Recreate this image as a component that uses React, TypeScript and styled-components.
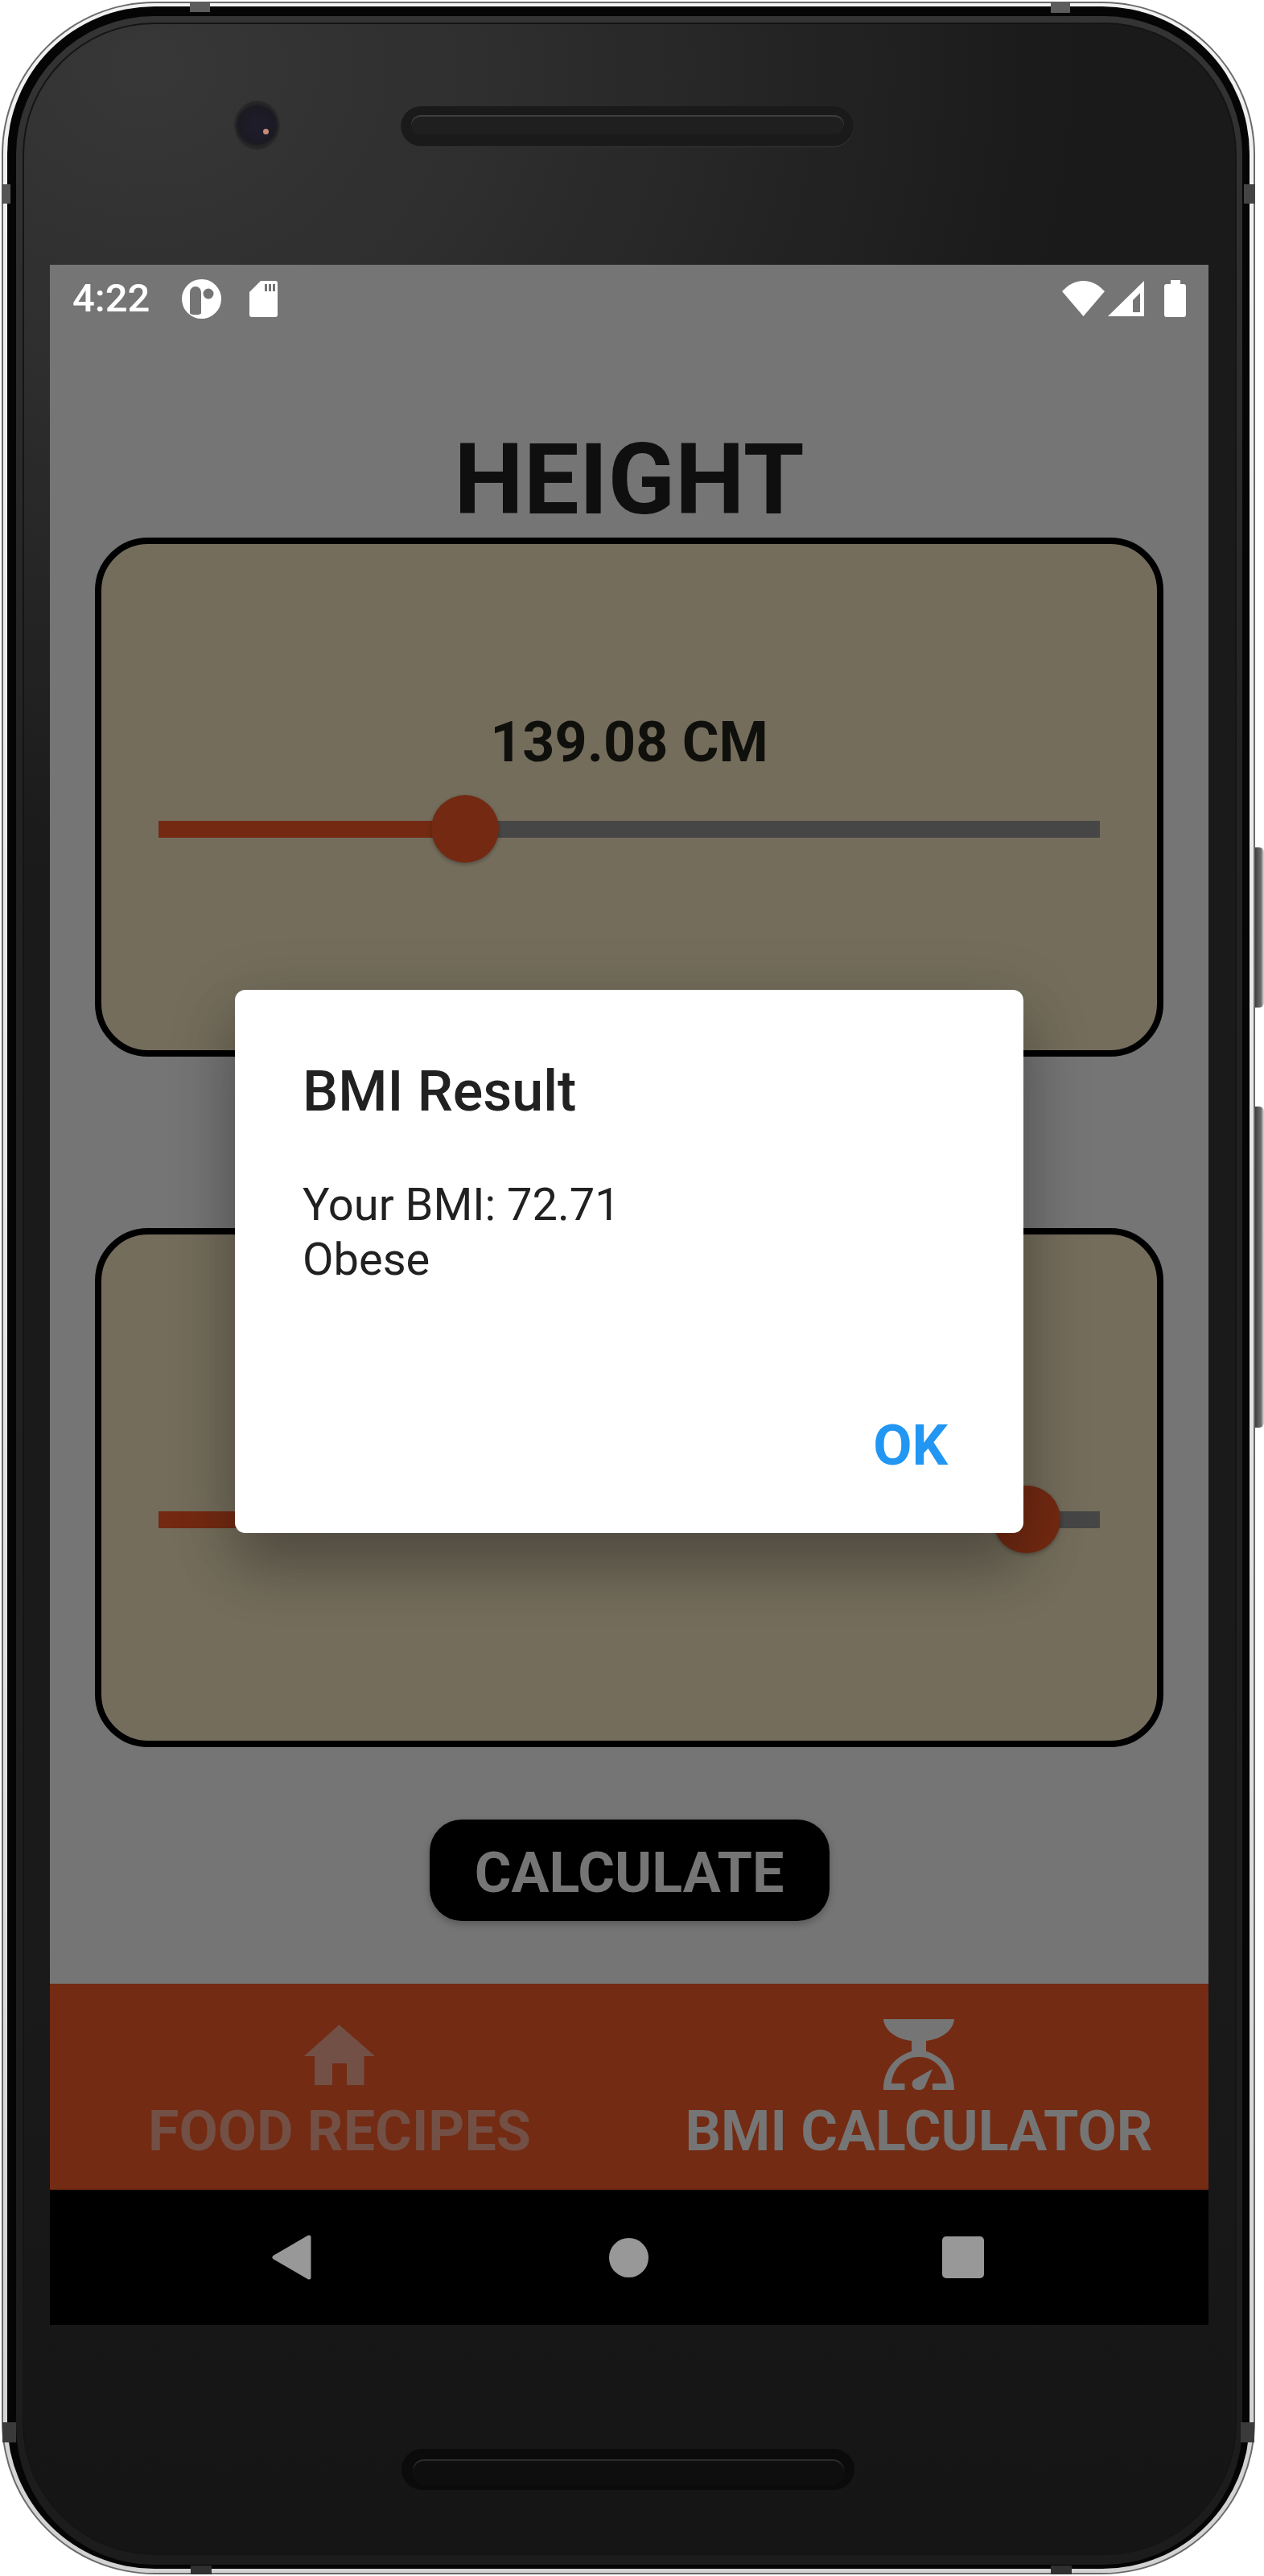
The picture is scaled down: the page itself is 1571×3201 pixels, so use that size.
import React from "react";
import styled, { createGlobalStyle } from "styled-components";

const Global = createGlobalStyle`
  * { box-sizing: border-box; }
  html, body { margin: 0; padding: 0; background: #fff; }
  body { font-family: Roboto, "Liberation Sans", sans-serif; }
`;

const Page = styled.div`
  position: relative;
  width: 1571px;
  height: 3201px;
  padding: 2px 0 0 2px;
  background: #fff;
  overflow: hidden;
`;

const SideButton = styled.div<{ $top: number; $height: number }>`
  position: absolute;
  left: 1558px;
  top: ${(p) => p.$top}px;
  width: 13px;
  height: ${(p) => p.$height}px;
  border-radius: 0 6px 6px 0;
  background: linear-gradient(90deg, #2e2e2e 0%, #5a5a5a 45%, #6a6a6a 70%, #dcdcdc 100%);
`;

const Shell = styled.div`
  position: relative;
  width: 1558px;
  height: 3197px;
  padding: 2px;
  border-radius: 190px;
  background: #6a6a6a;
`;

const Silver = styled.div`
  height: 100%;
  padding: 4px 5px 5px 5px;
  border-radius: 188px;
  background: linear-gradient(180deg, #f2f2f2 0%, #e6e6e6 50%, #d2d2d2 100%);
`;

const Gap = styled.div`
  height: 100%;
  padding: 12px 9px 5px 11px;
  border-radius: 183px;
  background: #050505;
`;

const Strip = styled.div`
  height: 100%;
  padding: 8px 7px 12px 8px;
  border-radius: 172px;
  background: linear-gradient(180deg, #343434 0%, #222 30%, #1c1c1c 100%);
`;

const Line = styled.div`
  height: 100%;
  padding: 2px;
  border-radius: 164px;
  background: #141414;
`;

const Bezel = styled.div`
  height: 100%;
  padding: 0 33px 0 32px;
  border-radius: 162px;
  background:
    radial-gradient(ellipse 1150px 1000px at 10% 4%, #373737 0%, #2e2e2e 38%, #1a1a1a 100%) no-repeat,
    linear-gradient(180deg, #1a1a1a 0%, #1a1a1a 75%, #151515 100%);
  background-size: 100% 1300px, 100% 100%;
`;

const Band = styled.div<{ $x: number; $y: number; $w: number; $h: number; $c: string }>`
  position: absolute;
  left: ${(p) => p.$x}px;
  top: ${(p) => p.$y}px;
  width: ${(p) => p.$w}px;
  height: ${(p) => p.$h}px;
  background: ${(p) => p.$c};
`;

const TopBezel = styled.div`
  height: 299px;
  padding: 96px 0 0 230px;
  display: flex;
  align-items: flex-start;
  gap: 151px;
`;

const Camera = styled.div`
  position: relative;
  width: 55px;
  height: 59px;
  border-radius: 50%;
  background: radial-gradient(circle at 50% 50%, #1f1d2b 0%, #1b1a23 58%, #262626 66%, #232323 100%);
  box-shadow: 0 0 0 1px #2c2c2c;
  &::after {
    content: "";
    position: absolute;
    left: 35px;
    top: 34px;
    width: 7px;
    height: 7px;
    border-radius: 50%;
    background: #c98a78;
  }
`;

const Speaker = styled.div<{ $bottom?: boolean }>`
  width: 563px;
  height: 51px;
  margin-top: ${(p) => (p.$bottom ? 0 : 6)}px;
  padding: ${(p) => (p.$bottom ? "13px 13px 6px 14px" : "11px 12px 16px 13px")};
  border-radius: 26px;
  background: ${(p) => (p.$bottom ? "#0b0b0b" : "#1a1a1a")};
  box-shadow: ${(p) => (p.$bottom ? "none" : "inset 0 -1px 1px #3c3c3c")};
`;

const SpeakerSlot = styled.div<{ $bottom?: boolean }>`
  height: 100%;
  border-radius: 14px;
  background: ${(p) => (p.$bottom ? "#0e0e0e" : "#1f1f1f")};
  box-shadow: inset 0 2px 1px ${(p) => (p.$bottom ? "#2e2e2e" : "#3f3f3f")};
`;

const BottomBezel = styled.div`
  height: 284px;
  padding: 154px 0 0 437px;
`;

const Screen = styled.div`
  position: relative;
  width: 1440px;
  height: 2560px;
  display: flex;
  flex-direction: column;
  background: #757575;
  overflow: hidden;
`;

const StatusBar = styled.div`
  flex: none;
  height: 84px;
  padding: 0 28px;
  display: flex;
  align-items: center;
  justify-content: space-between;
`;

const StatusGroup = styled.div<{ $gap: number }>`
  display: flex;
  align-items: center;
  gap: ${(p) => p.$gap}px;
`;

const Time = styled.span`
  font-size: 49px;
  line-height: 58px;
  font-weight: 500;
  color: #fff;
  margin-right: 5px;
`;

const BatterySlot = styled.div`
  display: flex;
  margin-left: 21px;
`;

const Content = styled.main`
  flex: 1;
  padding: 111px 56px 0;
  display: flex;
  flex-direction: column;
  align-items: center;
`;

const Heading = styled.h1`
  margin: 0;
  font-size: 122.5px;
  line-height: 144px;
  font-weight: 700;
  color: #0f0f0f;
`;

const Card = styled.section<{ $gapAbove?: number }>`
  width: 100%;
  height: 645px;
  margin-top: ${(p) => p.$gapAbove ?? 0}px;
  padding: 0 71px 233px;
  border: 8px solid #000;
  border-radius: 66px;
  background: #746d5c;
  display: flex;
  flex-direction: column;
  justify-content: flex-end;
  align-items: center;
`;

const Value = styled.div`
  font-size: 70px;
  line-height: 82px;
  font-weight: 700;
  color: #0f0f0c;
  margin-bottom: 25px;
`;

const Slider = styled.div`
  position: relative;
  width: 100%;
  height: 84px;
  display: flex;
  align-items: center;
`;

const Track = styled.div`
  width: 100%;
  height: 21px;
  background: #464646;
`;

const TrackFill = styled.div`
  height: 100%;
  background: #742a12;
`;

const Thumb = styled.div`
  position: absolute;
  top: 0;
  width: 84px;
  height: 84px;
  margin-left: -42px;
  border-radius: 50%;
  background: #742a12;
  box-shadow: 0 2px 5px rgba(0, 0, 0, 0.3);
`;

const CalcButton = styled.button`
  margin-top: 90px;
  width: 497px;
  height: 126px;
  padding: 6px 0 0;
  border: 0;
  border-radius: 40px;
  background: #000;
  color: #757575;
  font-family: inherit;
  font-size: 70px;
  font-weight: 700;
  box-shadow: 0 4px 10px rgba(0, 0, 0, 0.25);
`;

const TabBar = styled.nav`
  flex: none;
  height: 256px;
  display: flex;
  background: #742b13;
`;

const Tab = styled.div<{ $active?: boolean }>`
  flex: 1;
  padding-top: 44px;
  display: flex;
  flex-direction: column;
  align-items: center;
  color: ${(p) => (p.$active ? "#757575" : "#725046")};
`;

const TabIconBox = styled.div`
  height: 88px;
  margin-bottom: 10px;
  display: flex;
  align-items: center;
  justify-content: center;
`;

const TabLabel = styled.div`
  font-size: 70px;
  line-height: 82px;
  font-weight: 700;
`;

const NavBar = styled.div`
  flex: none;
  height: 168px;
  background: #000;
  display: grid;
  grid-template-columns: 300px 415px 415px;
  align-items: center;
  justify-items: start;
  padding-left: 276px;
`;

const NavCircle = styled.div`
  width: 49px;
  height: 49px;
  border-radius: 50%;
  background: #989898;
  margin-left: 119px;
`;

const NavSquare = styled.div`
  width: 52px;
  height: 52px;
  border-radius: 5px;
  background: #989898;
  margin-left: 118px;
`;

const Overlay = styled.div`
  position: absolute;
  left: 0;
  right: 0;
  top: 84px;
  bottom: 168px;
  display: flex;
  align-items: center;
  justify-content: center;
`;

const Dialog = styled.div`
  width: 980px;
  height: 675px;
  padding: 85px 94px 68px 84px;
  border-radius: 13px;
  background: #fff;
  display: flex;
  flex-direction: column;
  box-shadow: 0 45px 70px rgba(0, 0, 0, 0.22), 0 20px 90px rgba(0, 0, 0, 0.16);
`;

const DialogTitle = styled.h2`
  margin: 0 0 66px;
  font-size: 70px;
  line-height: 82px;
  font-weight: 500;
  color: #212121;
`;

const DialogBody = styled.div`
  font-size: 56px;
  line-height: 68px;
  color: #212121;
`;

const DialogActions = styled.div`
  margin-top: auto;
  display: flex;
  justify-content: flex-end;
`;

const OkButton = styled.div`
  font-size: 70px;
  line-height: 82px;
  font-weight: 700;
  color: #2196f3;
`;

const Home = () => (
  <svg width="88" height="75" viewBox="0 0 88 75" fill="currentColor">
    <path d="M43.5 0L88 39H74.5V75H53V48H35V75H13V39H0Z" />
  </svg>
);

const Scale = () => (
  <svg width="88" height="88" viewBox="0 0 88 88" fill="currentColor">
    <path d="M0 0H88C87 14 72 25 53 27V40C70 45 88 60 88 88H61V80H78C76 60 62 47 44 47C26 47 12 60 10 80H26.5V88H0C0 60 18 45 35 40V27C16 25 1 14 0 0Z" />
    <path d="M61 62L52 83C50 90 38 90 36 83C35 79 36 76 40 74Z" />
  </svg>
);

const DotIcon = () => (
  <svg width="49" height="49" viewBox="0 0 49 49">
    <circle cx="24.5" cy="24.5" r="24.5" fill="#fff" />
    <path d="M10 42V17C10 12 13 9 17 9C21 9 24 12 24 17V42C24 45 10 45 10 42Z" fill="#757575" />
    <circle cx="33" cy="18" r="6.5" fill="#757575" />
  </svg>
);

const SdIcon = () => (
  <svg width="35" height="45" viewBox="0 0 35 45">
    <path d="M14 0H32A3 3 0 0 1 35 3V42A3 3 0 0 1 32 45H3A3 3 0 0 1 0 42V14Z" fill="#fff" />
    <path d="M19 4H22V13H19ZM24 4H27V13H24ZM29 4H32V13H29Z" fill="#757575" />
  </svg>
);

const Wifi = () => (
  <svg width="53" height="44" viewBox="0 0 53 44">
    <path d="M0 13C8 5 16 0 26.5 0C37 0 45 5 53 13L26.5 44Z" fill="#fff" />
  </svg>
);

const Signal = () => (
  <svg width="45" height="44" viewBox="0 0 45 44">
    <path d="M0 44L45 0V44Z" fill="#fff" />
    <path d="M31 39V24L40 15V39Z" fill="#757575" />
  </svg>
);

const Battery = () => (
  <svg width="27" height="46" viewBox="0 0 27 46">
    <path d="M8 0H20V5H24A3 3 0 0 1 27 8V43A3 3 0 0 1 24 46H3A3 3 0 0 1 0 43V8A3 3 0 0 1 3 5H8Z" fill="#fff" />
  </svg>
);

const Back = () => (
  <svg width="49" height="56" viewBox="0 0 49 56">
    <path d="M3 28L46 3V53Z" fill="#989898" stroke="#989898" strokeWidth="5" strokeLinejoin="round" />
  </svg>
);

const bands = [
  { x: 234, y: 0, w: 25, h: 13, c: "#5c5c5c" },
  { x: 1304, y: 0, w: 24, h: 14, c: "#5c5c5c" },
  { x: 0, y: 227, w: 11, h: 24, c: "#555" },
  { x: 1544, y: 227, w: 14, h: 24, c: "#444" },
  { x: 235, y: 3186, w: 26, h: 11, c: "#303030" },
  { x: 1304, y: 3186, w: 26, h: 11, c: "#303030" },
  { x: 1, y: 3008, w: 17, h: 25, c: "#3a3a3a" },
  { x: 1540, y: 3008, w: 17, h: 25, c: "#3a3a3a" },
];

export default function App() {
  return (
    <Page>
      <Global />
      <SideButton $top={1053} $height={199} />
      <SideButton $top={1375} $height={399} />
      <Shell>
        <Silver>
          <Gap>
            <Strip>
              <Line>
                <Bezel>
                  <TopBezel>
                    <Camera />
                    <Speaker>
                      <SpeakerSlot />
                    </Speaker>
                  </TopBezel>
                  <Screen>
                    <StatusBar>
                      <StatusGroup $gap={35}>
                        <Time>4:22</Time>
                        <DotIcon />
                        <SdIcon />
                      </StatusGroup>
                      <StatusGroup $gap={4}>
                        <Wifi />
                        <Signal />
                        <BatterySlot>
                          <Battery />
                        </BatterySlot>
                      </StatusGroup>
                    </StatusBar>
                    <Content>
                      <Heading>HEIGHT</Heading>
                      <Card>
                        <Value>139.08 CM</Value>
                        <Slider>
                          <Track>
                            <TrackFill style={{ width: "32.6%" }} />
                          </Track>
                          <Thumb style={{ left: "32.6%" }} />
                        </Slider>
                      </Card>
                      <Card $gapAbove={213}>
                        <Slider>
                          <Track>
                            <TrackFill style={{ width: "92.2%" }} />
                          </Track>
                          <Thumb style={{ left: "92.2%" }} />
                        </Slider>
                      </Card>
                      <CalcButton>CALCULATE</CalcButton>
                    </Content>
                    <TabBar>
                      <Tab>
                        <TabIconBox>
                          <Home />
                        </TabIconBox>
                        <TabLabel>FOOD RECIPES</TabLabel>
                      </Tab>
                      <Tab $active>
                        <TabIconBox>
                          <Scale />
                        </TabIconBox>
                        <TabLabel>BMI CALCULATOR</TabLabel>
                      </Tab>
                    </TabBar>
                    <NavBar>
                      <Back />
                      <NavCircle />
                      <NavSquare />
                    </NavBar>
                    <Overlay>
                      <Dialog>
                        <DialogTitle>BMI Result</DialogTitle>
                        <DialogBody>
                          Your BMI: 72.71
                          <br />
                          Obese
                        </DialogBody>
                        <DialogActions>
                          <OkButton>OK</OkButton>
                        </DialogActions>
                      </Dialog>
                    </Overlay>
                  </Screen>
                  <BottomBezel>
                    <Speaker $bottom>
                      <SpeakerSlot $bottom />
                    </Speaker>
                  </BottomBezel>
                </Bezel>
              </Line>
            </Strip>
          </Gap>
        </Silver>
        {bands.map((b) => (
          <Band key={`${b.x}-${b.y}`} $x={b.x} $y={b.y} $w={b.w} $h={b.h} $c={b.c} />
        ))}
      </Shell>
    </Page>
  );
}
